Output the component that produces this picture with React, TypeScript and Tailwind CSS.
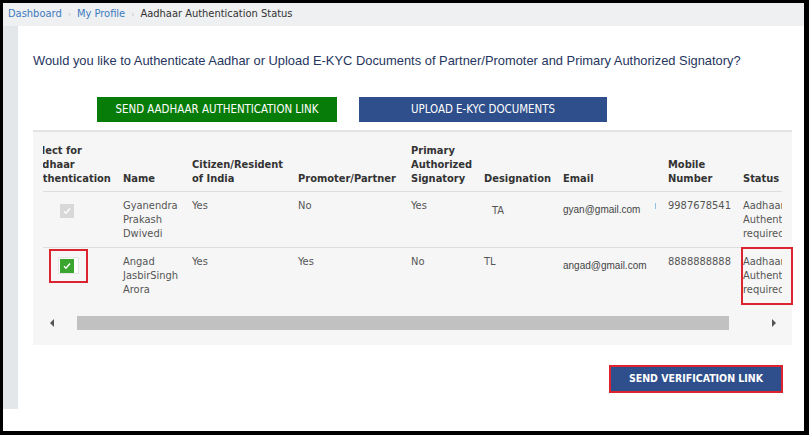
import React from "react";

const tahoma = { fontFamily: '"DejaVu Sans Condensed", "DejaVu Sans", sans-serif' };

const rows = [
  {
    name: ["Gyanendra", "Prakash", "Dwivedi"],
    citizen: "Yes",
    promoter: "No",
    primary: "Yes",
    designation: "TA",
    email: "gyan@gmail.com",
    mobile: "9987678541",
    checked: false,
  },
  {
    name: ["Angad", "JasbirSingh", "Arora"],
    citizen: "Yes",
    promoter: "Yes",
    primary: "No",
    designation: "TL",
    email: "angad@gmail.com",
    mobile: "8888888888",
    checked: true,
  },
];

const Check = () => (
  <svg width="8" height="8" viewBox="0 0 8 8">
    <path d="M1 4.2 L3 6.3 L7 1.5" fill="none" stroke="white" strokeWidth="1.4" />
  </svg>
);

const App: React.FC = () => {
  return (
    <div className="w-[809px] h-[435px] bg-black pt-[3px] pl-[3px] pr-[5px] pb-[4px]">
      <div className="h-full bg-white flex flex-col overflow-hidden">
        <nav className="h-[23px] shrink-0 bg-[#eef0f1] flex items-center pl-[5px] text-[11px]" style={tahoma}>
          <span className="text-[#3c7ac0]">Dashboard</span>
          <span className="text-[#c5c9cd] mx-[6px] text-[9px]">›</span>
          <span className="text-[#3c7ac0]">My Profile</span>
          <span className="text-[#c5c9cd] mx-[6px] text-[9px]">›</span>
          <span className="text-[#333]">Aadhaar Authentication Status</span>
        </nav>

        <div className="flex flex-1 min-w-0">
          <div className="w-[15px] shrink-0 h-[383px] bg-[#e4e7ea]" />
          <main className="flex-1 min-w-0 pl-[15px] pr-[12px]">
            <p
              className="pt-[27px] text-[12.9px] leading-[16px] text-[#26355e]"
              style={{ fontFamily: '"Liberation Sans", Arial, sans-serif' }}
            >
              Would you like to Authenticate Aadhar or Upload E-KYC Documents of Partner/Promoter and Primary Authorized Signatory?
            </p>

            <div className="flex gap-[22px] mt-[28px] ml-[64px]" style={tahoma}>
              <button className="w-[240px] h-[25px] bg-[#087c08] text-white text-[11.4px]">
                SEND AADHAAR AUTHENTICATION LINK
              </button>
              <button className="w-[248px] h-[25px] bg-[#2e4f8b] text-white text-[11.4px]">
                UPLOAD E-KYC DOCUMENTS
              </button>
            </div>

            <section className="relative mt-[8px] h-[215px] bg-[#f6f6f6] border-t-2 border-[#e3e3e3] px-[10px]" style={tahoma}>
              <div className="overflow-hidden">
                <table className="table-fixed w-[815px] border-collapse -ml-[23px] text-[11px] leading-[14px] text-[#555]">
                  <colgroup>
                    <col className="w-[95px]" />
                    <col className="w-[69px]" />
                    <col className="w-[106px]" />
                    <col className="w-[113px]" />
                    <col className="w-[73px]" />
                    <col className="w-[79px]" />
                    <col className="w-[105px]" />
                    <col className="w-[75px]" />
                    <col className="w-[100px]" />
                  </colgroup>
                  <thead>
                    <tr className="h-[59px] border-b border-[#dedede] text-[#333] font-bold text-left align-bottom whitespace-nowrap">
                      <th className="pl-2 pb-[5px]">Select for<br />Aadhaar<br />Authentication</th>
                      <th className="pl-2 pb-[5px]">Name</th>
                      <th className="pl-2 pb-[5px]">Citizen/Resident<br />of India</th>
                      <th className="pl-2 pb-[5px]">Promoter/Partner</th>
                      <th className="pl-2 pb-[5px]">Primary<br />Authorized<br />Signatory</th>
                      <th className="pl-2 pb-[5px]">Designation</th>
                      <th className="pl-2 pb-[5px]">Email</th>
                      <th className="pl-2 pb-[5px]">Mobile<br />Number</th>
                      <th className="pl-2 pb-[5px]">Status</th>
                    </tr>
                  </thead>
                  <tbody>
                    {rows.map((r, i) => (
                      <tr
                        key={r.mobile}
                        className={`align-top whitespace-nowrap ${i === 0 ? "h-[56px] border-b border-[#dedede]" : "h-[58px]"}`}
                      >
                        <td className="pl-2 pt-px">
                          {r.checked ? (
                            <div className="ml-[21px] w-[39px] h-[34px] border-2 border-[#dc2330] flex items-center justify-center">
                              <div className="w-[21px] h-[17px] bg-white border border-[#e6e6e6] flex items-center pl-px">
                                <div className="w-[14px] h-[14px] bg-[#3aa52f] flex items-center justify-center">
                                  <Check />
                                </div>
                              </div>
                            </div>
                          ) : (
                            <div className="ml-[32px] mt-[11px] w-[14px] h-[14px] bg-[#d8d8d8] flex items-center justify-center">
                              <Check />
                            </div>
                          )}
                        </td>
                        <td className="pl-2 pt-[7px]">
                          {r.name[0]}
                          <br />
                          {r.name[1]}
                          <br />
                          {r.name[2]}
                        </td>
                        <td className="pl-2 pt-[7px]">{r.citizen}</td>
                        <td className="pl-2 pt-[7px]">{r.promoter}</td>
                        <td className="pl-2 pt-[7px]">{r.primary}</td>
                        <td className={i === 0 ? "pl-4 pt-[12px]" : "pl-2 pt-[7px]"}>{r.designation}</td>
                        <td
                          className="relative pl-2 pt-[11px] text-[10px] text-[#444]"
                          style={{ fontFamily: '"Liberation Sans", Arial, sans-serif' }}
                        >
                          {r.email}
                          {i === 0 && <span className="absolute right-[4px] top-[11px] w-px h-[6px] bg-[#8fc0e6]" />}
                        </td>
                        <td className="pl-2 pt-[7px]">{r.mobile}</td>
                        <td className="pl-2 pt-[7px]">
                          Aadhaar
                          <br />
                          Authentication
                          <br />
                          required
                        </td>
                      </tr>
                    ))}
                  </tbody>
                </table>
              </div>

              <div className="mt-[11px] h-[14px] flex items-center">
                <div className="w-[17px] flex justify-center">
                  <span className="w-0 h-0 border-y-[4px] border-y-transparent border-r-[4px] border-r-[#555]" />
                </div>
                <div className="flex-1 h-full">
                  <div className="ml-[17px] w-[652px] h-full bg-[#c1c1c1]" />
                </div>
                <div className="w-[17px] flex justify-center">
                  <span className="w-0 h-0 border-y-[4px] border-y-transparent border-l-[4px] border-l-[#555]" />
                </div>
              </div>

              <div className="absolute left-[708px] top-[115px] w-[52px] h-[58px] border-2 border-[#dc2330]" />
            </section>

            <div className="flex justify-end mt-[20px] pr-[9px]" style={tahoma}>
              <button className="w-[174px] h-[28px] border-2 border-[#dc2330] bg-[#2e4f8b] text-white font-bold text-[10.5px]">
                SEND VERIFICATION LINK
              </button>
            </div>
          </main>
        </div>
      </div>
    </div>
  );
};

export default App;
